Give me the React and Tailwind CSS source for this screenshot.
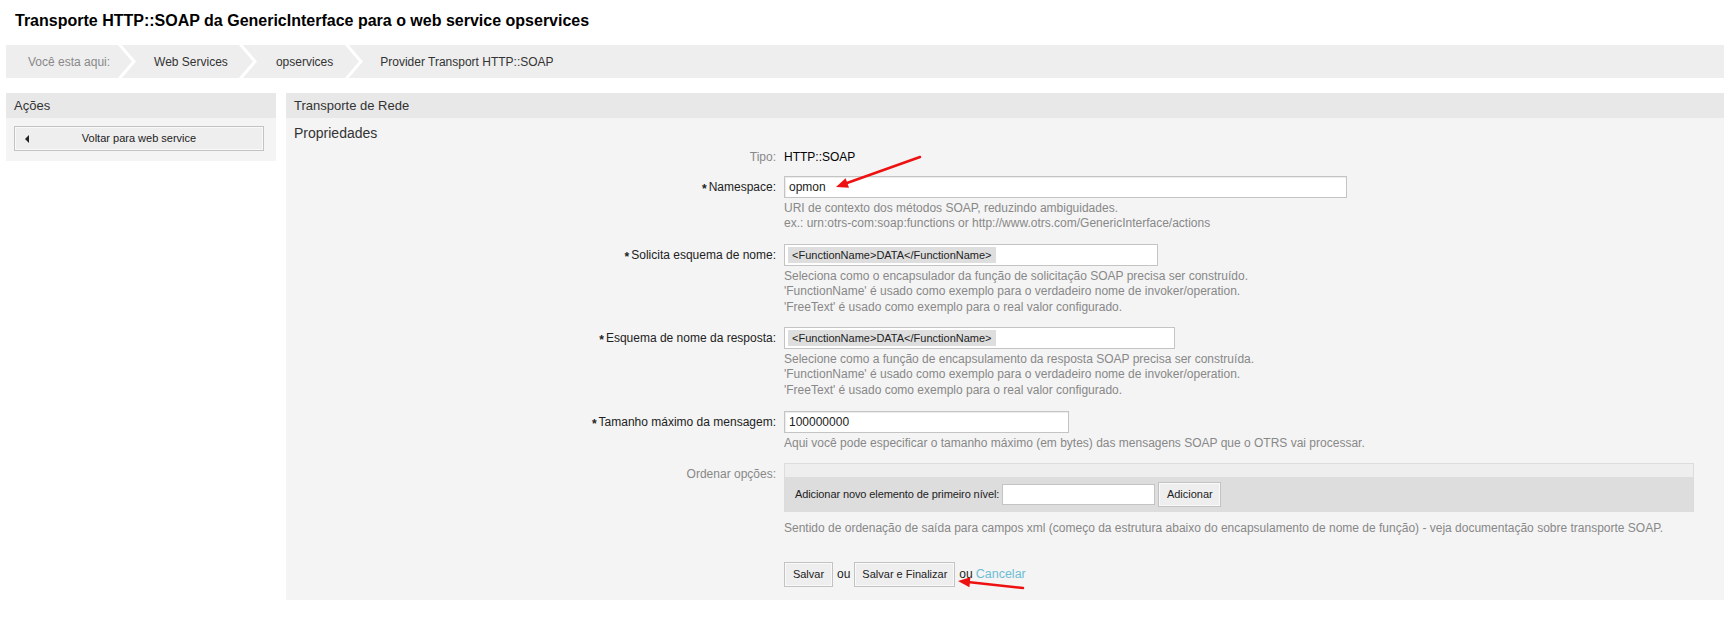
import React from "react";

function Chevron() {
  return (
    <svg width="19" height="33" viewBox="0 0 19 33" className="shrink-0">
      <polyline points="2,-1 17,16.5 2,34" fill="none" stroke="#ffffff" strokeWidth="3" />
    </svg>
  );
}

function Chip({ children }) {
  return (
    <span className="my-[2px] ml-[3px] inline-flex h-[16px] items-center bg-[#dedede] px-[4px] text-[11px] text-[#222]">
      {children}
    </span>
  );
}

function Row({ label, required, muted, children, className = "" }) {
  return (
    <div className={`flex ${className}`}>
      <div className={`w-[482px] shrink-0 text-right leading-[22px] ${muted ? "text-[#888]" : "text-[#222]"}`}>
        {required && <span className="relative top-[2px] mr-[2px] font-bold text-[#222]">*</span>}
        {label}
      </div>
      <div className="ml-[8px]">{children}</div>
    </div>
  );
}

function Desc({ children }) {
  return <div className="mt-[3px] leading-[15.4px] text-[#888]">{children}</div>;
}

const inputCls = "flex h-[22px] items-center border border-[#c4c4c4] bg-white px-[4px] text-[12px] text-[#222] shadow-[inset_1px_1px_1px_#ececec]";
const btnCls = "h-[25px] border border-[#c3c3c3] bg-[#eeeeee] text-[11px] text-[#222] shadow-[inset_0_0_0_1px_#f9f9f9]";

export default function App() {
  return (
    <div className="relative min-h-[620px] bg-white font-['Liberation_Sans',Arial,sans-serif] text-[12px] text-[#222]">
      <h1 className="pl-[15px] pt-[11px] text-[16px] font-bold leading-[20px] text-black">
        Transporte HTTP::SOAP da GenericInterface para o web service opservices
      </h1>

      {/* Breadcrumb */}
      <nav className="ml-[6px] mt-[14px] flex h-[33px] items-center bg-[#eeeeee] text-[12px]">
        <span className="pl-[22px] pr-[7px] text-[#888]">Você esta aqui:</span>
        <Chevron />
        <span className="pl-[18px] pr-[10px] text-[#333]">Web Services</span>
        <Chevron />
        <span className="pl-[19px] pr-[11px] text-[#333]">opservices</span>
        <Chevron />
        <span className="pl-[17px] text-[#333]">Provider Transport HTTP::SOAP</span>
      </nav>

      <div className="ml-[6px] mt-[15px] flex items-start gap-[10px]">
        {/* Actions */}
        <aside className="w-[270px] shrink-0 bg-[#f4f4f4] pb-[10px]">
          <h2 className="h-[25px] bg-[#e8e8e8] px-[8px] text-[13px] leading-[25px] text-[#333]">Ações</h2>
          <div className="px-[8px] pt-[8px]">
            <button className={`relative flex w-[250px] items-center justify-center ${btnCls}`}>
              <span className="absolute left-[10px] top-[8px] h-0 w-0 border-y-[4px] border-r-[4px] border-y-transparent border-r-[#222]" />
              Voltar para web service
            </button>
          </div>
        </aside>

        {/* Network transport */}
        <section className="flex-1 bg-[#f4f4f4] pb-[13px]">
          <h2 className="h-[25px] bg-[#e8e8e8] px-[8px] text-[13px] leading-[25px] text-[#333]">Transporte de Rede</h2>
          <div className="px-[8px]">
            <h3 className="pt-[6px] text-[14px] leading-[18px] text-[#333]">Propriedades</h3>

            <div className="mt-[4px]">
              <Row label="Tipo:" muted>
                <div className="leading-[22px] text-black">HTTP::SOAP</div>
              </Row>

              <Row label="Namespace:" required className="mt-[8px]">
                <div className={`${inputCls} w-[563px]`}>opmon</div>
                <Desc>
                  URI de contexto dos métodos SOAP, reduzindo ambiguidades.
                  <br />
                  ex.: urn:otrs-com:soap:functions or http://www.otrs.com/GenericInterface/actions
                </Desc>
              </Row>

              <Row label="Solicita esquema de nome:" required className="mt-[12px]">
                <div className="flex h-[22px] w-[374px] items-center border border-[#c4c4c4] bg-white">
                  <Chip>&lt;FunctionName&gt;DATA&lt;/FunctionName&gt;</Chip>
                </div>
                <Desc>
                  Seleciona como o encapsulador da função de solicitação SOAP precisa ser construído.
                  <br />
                  'FunctionName' é usado como exemplo para o verdadeiro nome de invoker/operation.
                  <br />
                  'FreeText' é usado como exemplo para o real valor configurado.
                </Desc>
              </Row>

              <Row label="Esquema de nome da resposta:" required className="mt-[12px]">
                <div className="flex h-[22px] w-[391px] items-center border border-[#c4c4c4] bg-white">
                  <Chip>&lt;FunctionName&gt;DATA&lt;/FunctionName&gt;</Chip>
                </div>
                <Desc>
                  Selecione como a função de encapsulamento da resposta SOAP precisa ser construída.
                  <br />
                  'FunctionName' é usado como exemplo para o verdadeiro nome de invoker/operation.
                  <br />
                  'FreeText' é usado como exemplo para o real valor configurado.
                </Desc>
              </Row>

              <Row label="Tamanho máximo da mensagem:" required className="mt-[13px]">
                <div className={`${inputCls} w-[285px]`}>100000000</div>
                <Desc>Aqui você pode especificar o tamanho máximo (em bytes) das mensagens SOAP que o OTRS vai processar.</Desc>
              </Row>

              <Row label="Ordenar opções:" muted className="mt-[11px]">
                <div className="w-[910px] border-x border-t border-[#dcdcdc]">
                  <div className="h-[13px] bg-[#eeeeee]" />
                  <div className="flex h-[35px] items-center bg-[#dddddd] pl-[10px] text-[11px] text-[#222]">
                    <span className="tracking-[-0.1px]">Adicionar novo elemento de primeiro nível:</span>
                    <div className="ml-[3px] h-[21px] w-[153px] border border-[#c4c4c4] bg-white" />
                    <button className={`ml-[3px] w-[63px] ${btnCls}`}>Adicionar</button>
                  </div>
                </div>
                <div className="mt-[9px] leading-[15px] text-[#888]">
                  Sentido de ordenação de saída para campos xml (começo da estrutura abaixo do encapsulamento de nome de função) - veja documentação sobre transporte SOAP.
                </div>
              </Row>

              <Row label="" className="mt-[26px]">
                <div className="flex items-center">
                  <button className={`w-[49px] ${btnCls}`}>Salvar</button>
                  <span className="mx-[4px] text-[12px] text-[#222]">ou</span>
                  <button className={`w-[101px] ${btnCls}`}>Salvar e Finalizar</button>
                  <span className="ml-[4px] text-[12px] text-[#222]">ou</span>
                  <a href="#" className="ml-[3px] text-[12.5px] text-[#6dbdd4]">Cancelar</a>
                </div>
              </Row>
            </div>
          </div>
        </section>
      </div>

      {/* annotation arrows */}
      <svg className="pointer-events-none absolute left-0 top-0" width="1724" height="620">
        <line x1="920" y1="157" x2="847" y2="183" stroke="#ee1111" strokeWidth="2.5" strokeLinecap="round" />
        <polygon points="836,187 849,187.7 845.6,178.3" fill="#ee1111" />
        <line x1="1023" y1="588" x2="970" y2="582.3" stroke="#ee1111" strokeWidth="2.5" strokeLinecap="round" />
        <polygon points="958,581 970.4,577.3 969.4,587.3" fill="#ee1111" />
      </svg>
    </div>
  );
}
